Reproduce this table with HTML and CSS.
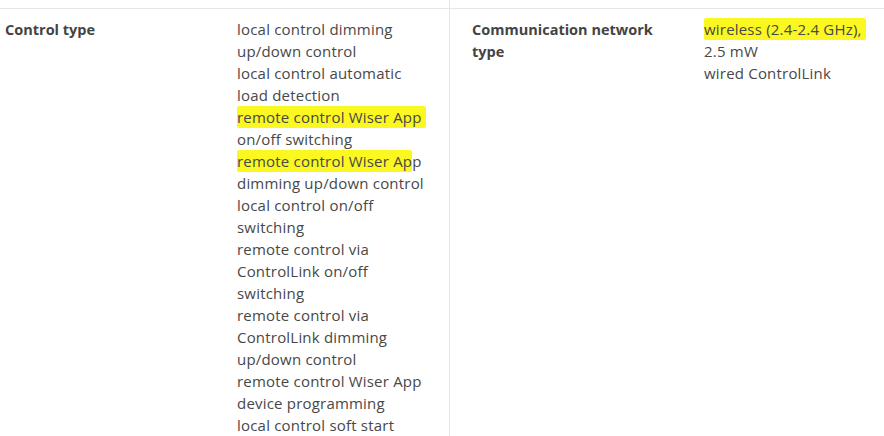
FILE: index.html
```html
<!DOCTYPE html>
<html lang="en">
<head>
  <meta charset="UTF-8">
  <title>Characteristics</title>
  <link rel="stylesheet" href="styles.css">
</head>
<body>
  <div class="specs">
    <div class="spec-row prev">
      <div class="spec"></div>
      <div class="spec"></div>
    </div>
    <div class="spec-row">
      <div class="spec">
        <div class="spec-label">Control type</div>
        <div class="spec-value">
          local control dimming<br>
          up/down control<br>
          local control automatic<br>
          load detection<br>
          <mark class="hl">remote control Wiser App</mark><br>
          on/off switching<br>
          <mark class="hl short">remote control Wiser Ap</mark>p<br>
          dimming up/down control<br>
          local control on/off<br>
          switching<br>
          remote control via<br>
          ControlLink on/off<br>
          switching<br>
          remote control via<br>
          ControlLink dimming<br>
          up/down control<br>
          remote control Wiser App<br>
          device programming<br>
          local control soft start
        </div>
      </div>
      <div class="spec">
        <div class="spec-label">Communication network<br>type</div>
        <div class="spec-value">
          <mark class="hl">wireless (2.4-2.4 GHz),</mark><br>
          2.5 mW<br>
          wired ControlLink
        </div>
      </div>
    </div>
  </div>
</body>
</html>
```

FILE: styles.css
```css
body {
  margin: 0;
  background-color: #fff;
  font-family: "Open Sans", "Noto Sans", sans-serif;
  font-size: 14.5px;
  line-height: 22px;
  color: #444;
}
.specs {
  width: 898px;
}
.spec-row {
  display: grid;
  grid-template-columns: 449px 449px;
  border-top: 1px solid #e6e6e6;
}
.spec-row.prev {
  border-top: none;
  height: 8px;
}
.spec {
  display: grid;
  grid-template-columns: 232px 210px;
  align-items: start;
  padding: 10px 0 0 5px;
  min-height: 426px;
  white-space: nowrap;
}
.prev .spec {
  min-height: 0;
  padding: 0;
}
.spec + .spec {
  border-left: 1px solid #e6e6e6;
  padding-left: 22px;
}
.spec-label {
  font-weight: bold;
  color: #444;
}
.spec-value {
  margin-top: -1px;
  font-size: 15px;
  letter-spacing: 0.2px;
  color: #484848;
}
.hl {
  background-color: #fbf720;
  color: #484848;
  padding: 1px 4px 1px 0;
  border-radius: 2px;
}
.hl.short {
  padding-right: 0;
}
```
